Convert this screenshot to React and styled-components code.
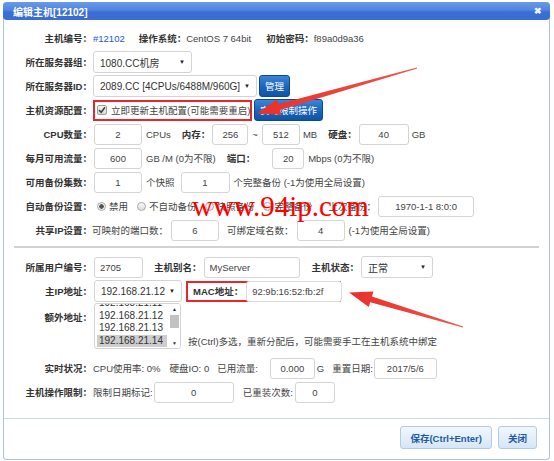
import React from 'react';
import styled, { createGlobalStyle } from "styled-components";

const GlobalStyle = createGlobalStyle`
    body {
        margin: 0;
        background: #fff;
        font-family: "Liberation Sans", "Noto Sans CJK SC", sans-serif;
        font-size: 9.5px;
        color: #333;
    }
`

const ips = ['192.168.21.11', '192.168.21.12', '192.168.21.13', '192.168.21.14'];

const App = () => {
    return (
        <Page>
            <GlobalStyle />
            <Dialog>
                <TitleBar>
                    <span>编辑主机[12102]</span>
                    <Close>✖</Close>
                </TitleBar>
                <Body>
                    <Row>
                        <Label>主机编号：</Label>
                        <Link ml={1}>#12102</Link>
                        <Bold ml={14}>操作系统：</Bold>
                        <Text>CentOS 7 64bit</Text>
                        <Bold ml={15}>初始密码：</Bold>
                        <Text>f89a0d9a36</Text>
                    </Row>
                    <Row>
                        <Label>所在服务器组：</Label>
                        <Select w={99} ml={1}>1080.CC机房</Select>
                    </Row>
                    <Row>
                        <Label>所在服务器ID：</Label>
                        <Select w={164} ml={1}>2089.CC [4CPUs/6488M/960G]</Select>
                        <DarkButton ml={2}>管理</DarkButton>
                    </Row>
                    <Row>
                        <Label>主机资源配置：</Label>
                        <RedBox ml={1} w={159}>
                            <CheckBox>
                                <svg width="8" height="8" viewBox="0 0 8 8">
                                    <path d="M1 4.2 L3.2 6.3 L7 1.2" stroke="#444" strokeWidth="1.6" fill="none" />
                                </svg>
                            </CheckBox>
                            <Text ml={4}>立即更新主机配置(可能需要重启)</Text>
                        </RedBox>
                        <DarkButton ml={2}>实时限制操作</DarkButton>
                    </Row>
                    <Row>
                        <Label>CPU数量：</Label>
                        <Input w={48} ml={2} value="2" readOnly />
                        <Text ml={4}>CPUs</Text>
                        <Bold ml={11}>内存：</Bold>
                        <Input w={36} ml={2} value="256" readOnly />
                        <Text ml={4}>~</Text>
                        <Input w={38} ml={4} value="512" readOnly />
                        <Text ml={3}>MB</Text>
                        <Bold ml={11}>硬盘：</Bold>
                        <Input w={50} ml={2} value="40" readOnly />
                        <Text ml={3}>GB</Text>
                    </Row>
                    <Row>
                        <Label>每月可用流量：</Label>
                        <Input w={48} ml={2} value="600" readOnly />
                        <Text ml={4}>GB /M (0为不限)</Text>
                        <Bold ml={11}>端口：</Bold>
                        <Input w={32} ml={17} value="20" readOnly />
                        <Text ml={4}>Mbps (0为不限)</Text>
                    </Row>
                    <Row>
                        <Label>可用备份集数：</Label>
                        <Input w={48} ml={2} value="1" readOnly />
                        <Text ml={4}>个快照</Text>
                        <Input w={49} ml={6} value="1" readOnly />
                        <Text ml={4}>个完整备份 (-1为使用全局设置)</Text>
                    </Row>
                    <Row>
                        <Label>自动备份设置：</Label>
                        <Radio checked ml={5} />
                        <Text ml={3}>禁用</Text>
                        <Radio ml={9} />
                        <Text ml={3}>不自动备份</Text>
                        <Radio ml={8} />
                        <Text ml={3}>快照备份</Text>
                        <Radio ml={8} />
                        <Text ml={3}>完整备份</Text>
                        <Text ml={16}>上次备份：</Text>
                        <Input w={96} ml={2} value="1970-1-1 8:0:0" readOnly />
                    </Row>
                    <Row>
                        <Label>共享IP设置：</Label>
                        <Text>可映射的端口数：</Text>
                        <Input w={48} ml={3} value="6" readOnly />
                        <Text ml={8}>可绑定域名数：</Text>
                        <Input w={48} ml={3} value="4" readOnly />
                        <Text ml={4}>(-1为使用全局设置)</Text>
                    </Row>
                    <Separator />
                    <Row>
                        <Label>所属用户编号：</Label>
                        <Input w={49} ml={2} left value="2705" readOnly />
                        <Bold ml={11}>主机别名：</Bold>
                        <Input w={96} ml={2} left value="MyServer" readOnly />
                        <Bold ml={12}>主机状态：</Bold>
                        <Select w={72} ml={2}>正常</Select>
                    </Row>
                    <Row>
                        <Label>主IP地址：</Label>
                        <Select w={88} ml={2}>192.168.21.12</Select>
                        <RedBox ml={4} w={155}>
                            <Bold ml={5}>MAC地址：</Bold>
                            <Input w={96} ml={3} left flat value="92:9b:16:52:fb:2f" readOnly />
                        </RedBox>
                    </Row>
                    <ListRow>
                        <Label top>额外地址：</Label>
                        <ListBox>
                            <ListItems>
                                {ips.map((ip, i) => (
                                    <ListItem key={ip} selected={i === 3}>{ip}</ListItem>
                                ))}
                            </ListItems>
                            <ScrollBar>
                                <ScrollArrow>▲</ScrollArrow>
                                <ScrollThumb />
                                <ScrollArrow bottom>▼</ScrollArrow>
                            </ScrollBar>
                        </ListBox>
                        <Hint>按(Ctrl)多选，重新分配后，可能需要手工在主机系统中绑定</Hint>
                    </ListRow>
                    <Row>
                        <Label>实时状况：</Label>
                        <Text ml={1}>CPU使用率: 0%</Text>
                        <Text ml={9}>硬盘IO: 0</Text>
                        <Text ml={8}>已用流量:</Text>
                        <Input w={45} ml={12} value="0.000" readOnly />
                        <Text ml={2}>G</Text>
                        <Text ml={8}>重置日期:</Text>
                        <Input w={63} ml={1} value="2017/5/6" readOnly />
                    </Row>
                    <Row>
                        <Label>主机操作限制：</Label>
                        <Text ml={1}>限制日期标记:</Text>
                        <Input w={80} ml={1} value="0" readOnly />
                        <Text ml={9}>已重装次数:</Text>
                        <Input w={40} ml={2} value="0" readOnly />
                    </Row>
                </Body>
                <Footer>
                    <LightButton>保存(Ctrl+Enter)</LightButton>
                    <LightButton>关闭</LightButton>
                </Footer>
            </Dialog>
            <Watermark>www.94ip.com</Watermark>
            <Arrows width="554" height="461" viewBox="0 0 554 461">
                <defs>
                    <linearGradient id="ar" x1="0" y1="0" x2="1" y2="0">
                        <stop offset="0" stopColor="#e8302a" />
                        <stop offset="1" stopColor="#f0544c" />
                    </linearGradient>
                </defs>
                <polygon fill="url(#ar)" points="416.9,67.4 278.4,104.1 277,99.3 257,113.5 281.4,114.7 280,109.9 417.1,68.6" />
                <polygon fill="url(#ar)" points="463.1,326.4 372,296.4 373.4,291.6 349,292.5 368.8,307 370.2,302.2 462.9,327.6" />
            </Arrows>
        </Page>
    );
}

export default App;

const Page = styled.div`
    position: relative;
    width: 554px;
    height: 461px;
    overflow: hidden;
`
const Dialog = styled.div`
    margin: 2px 0 0 3px;
    width: 547px;
    height: 458px;
    box-sizing: border-box;
    border: 1px solid #a8c3e6;
    border-top: none;
    border-radius: 4px;
    display: flex;
    flex-direction: column;
    background: #fff;
`
const TitleBar = styled.div`
    height: 18px;
    margin: 0 -1px;
    border-radius: 4px;
    background: linear-gradient(#6a9ae8 0%, #4f84e0 45%, #3b6fd5 55%, #3a6cd2 100%);
    color: #fff;
    font-weight: bold;
    font-size: 10px;
    display: flex;
    align-items: center;
    justify-content: space-between;
    padding: 0 8px 0 10px;
    flex-shrink: 0;
`
const Close = styled.span`
    font-size: 9px;
    color: #f4f7fc;
`
const Body = styled.div`
    flex: 1;
    padding-top: 6px;
`
const Row = styled.div`
    display: flex;
    align-items: center;
    height: 24px;
    white-space: nowrap;
`
const ListRow = styled.div`
    display: flex;
    align-items: flex-start;
    height: 46px;
    margin-bottom: 7px;
    white-space: nowrap;
`
const Label = styled.div`
    width: 88px;
    flex-shrink: 0;
    text-align: right;
    font-weight: bold;
    color: #333;
    padding-top: ${props => props.top ? '7px' : '0'};
`
const Text = styled.span`
    margin-left: ${props => props.ml || 0}px;
    color: #444;
`
const Bold = styled.span`
    margin-left: ${props => props.ml || 0}px;
    font-weight: bold;
    color: #333;
`
const Link = styled.span`
    margin-left: ${props => props.ml || 0}px;
    color: #2b55d8;
`
const Input = styled.input`
    box-sizing: border-box;
    width: ${props => props.w}px;
    height: 21px;
    margin: 0 0 0 ${props => props.ml || 0}px;
    padding: 0;
    padding-left: ${props => props.left ? '5px' : '0'};
    border: 1px solid ${props => props.flat ? '#ddd' : '#d4d4d4'};
    border-radius: 3px;
    font-family: inherit;
    font-size: 9.5px;
    color: #444;
    text-align: ${props => props.left ? 'left' : 'center'};
    background: #fff;
    outline: none;
`
const Select = styled.div`
    box-sizing: border-box;
    width: ${props => props.w}px;
    height: 22px;
    margin-left: ${props => props.ml || 0}px;
    border: 1px solid #d4d4d4;
    border-radius: 3px;
    display: flex;
    align-items: center;
    justify-content: space-between;
    padding: 0 6px 0 6px;
    color: #333;
    font-size: 10px;
    &::after {
        content: "▼";
        font-size: 6px;
        color: #222;
    }
`
const DarkButton = styled.div`
    margin-left: ${props => props.ml || 0}px;
    height: 22px;
    box-sizing: border-box;
    padding: 0 5px;
    display: flex;
    align-items: center;
    border: 1px solid #0b4a93;
    border-radius: 3px;
    background: linear-gradient(#3c84d6, #1a62b8 60%, #0e54a6);
    color: #fff;
`
const RedBox = styled.div`
    margin-left: ${props => props.ml || 0}px;
    width: ${props => props.w}px;
    height: 21px;
    box-sizing: border-box;
    border: 2px solid #e8262b;
    display: flex;
    align-items: center;
`
const CheckBox = styled.span`
    margin-left: 2px;
    width: 10px;
    height: 10px;
    box-sizing: border-box;
    border: 1px solid #a0a0a0;
    border-radius: 2px;
    background: linear-gradient(#f4f4f4, #d8d8d8);
    display: flex;
    align-items: center;
    justify-content: center;
`
const Radio = styled.span`
    margin-left: ${props => props.ml || 0}px;
    width: 9px;
    height: 9px;
    box-sizing: border-box;
    border-radius: 50%;
    border: 1px solid #a8a8a8;
    background: ${props => props.checked
        ? 'radial-gradient(circle, #555 0 2px, #f0f0f0 2.5px)'
        : 'linear-gradient(#fafafa, #dcdcdc)'};
    flex-shrink: 0;
`
const Separator = styled.div`
    margin: 4px 10px 7px 10px;
    height: 2px;
    background: #d2d2d2;
`
const ListBox = styled.div`
    margin-left: 2px;
    width: 87px;
    height: 46px;
    box-sizing: border-box;
    border: 1px solid #d4d4d4;
    border-radius: 3px;
    display: flex;
    overflow: hidden;
    flex-shrink: 0;
`
const ListItems = styled.div`
    flex: 1;
    padding: 0 2px;
    margin-top: -7px;
`
const ListItem = styled.div`
    height: 12.5px;
    line-height: 12.5px;
    padding-left: 2px;
    font-size: 10px;
    color: #333;
    background: ${props => props.selected ? '#cdcdcd' : 'transparent'};
`
const ScrollBar = styled.div`
    width: 11px;
    display: flex;
    flex-direction: column;
    background: #fff;
`
const ScrollArrow = styled.div`
    height: 10px;
    font-size: 5px;
    line-height: 10px;
    text-align: center;
    color: #333;
    margin-top: ${props => props.bottom ? 'auto' : '0'};
`
const ScrollThumb = styled.div`
    margin: 1px 1px 0 1px;
    height: 13px;
    background: #c2c2c2;
`
const Hint = styled.span`
    align-self: flex-end;
    margin-left: 7px;
    margin-bottom: 1px;
    color: #444;
`
const Footer = styled.div`
    height: 41px;
    flex-shrink: 0;
    box-sizing: border-box;
    border-top: 1px solid #c5d9f0;
    display: flex;
    justify-content: flex-end;
    align-items: flex-start;
    gap: 6px;
    padding: 7px 12px 0 0;
`
const LightButton = styled.div`
    height: 23px;
    box-sizing: border-box;
    padding: 0 9px;
    display: flex;
    align-items: center;
    border: 1px solid #b2cbe8;
    border-radius: 3px;
    background: linear-gradient(#f1f7fd, #d6e6f7);
    color: #1d5aa6;
    font-weight: bold;
`
const Watermark = styled.div`
    position: absolute;
    left: 192px;
    top: 192px;
    font-family: "Liberation Serif", serif;
    font-size: 29px;
    line-height: 1;
    color: #f00;
    pointer-events: none;
`
const Arrows = styled.svg`
    position: absolute;
    left: 0;
    top: 0;
    pointer-events: none;
`
